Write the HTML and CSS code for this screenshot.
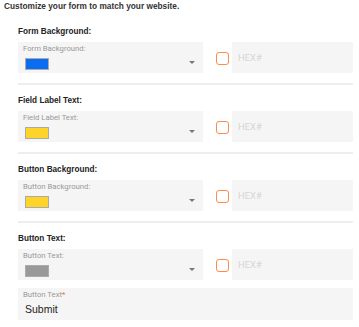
FILE: index.html
```html
<!DOCTYPE html>
<html lang="en">
<head>
    <meta charset="UTF-8">
    <meta name="viewport" content="width=device-width, initial-scale=1.0">
    <title>Customize form</title>
    <link rel="stylesheet" href="styles.css">
</head>
<body>
<div class="container">
    <p class="intro">Customize your form to match your website.</p>

    <div class="section">
        <h3 class="section-title">Form Background:</h3>
        <div class="color-row">
            <div class="picker">
                <span class="picker-label">Form Background:</span>
                <span class="swatch swatch-blue"></span>
                <span class="arrow"></span>
            </div>
            <span class="check"></span>
            <div class="hex">HEX#</div>
        </div>
        <div class="divider"></div>
    </div>

    <div class="section">
        <h3 class="section-title">Field Label Text:</h3>
        <div class="color-row">
            <div class="picker">
                <span class="picker-label">Field Label Text:</span>
                <span class="swatch swatch-yellow"></span>
                <span class="arrow"></span>
            </div>
            <span class="check"></span>
            <div class="hex">HEX#</div>
        </div>
        <div class="divider"></div>
    </div>

    <div class="section">
        <h3 class="section-title">Button Background:</h3>
        <div class="color-row">
            <div class="picker">
                <span class="picker-label">Button Background:</span>
                <span class="swatch swatch-yellow"></span>
                <span class="arrow"></span>
            </div>
            <span class="check"></span>
            <div class="hex">HEX#</div>
        </div>
        <div class="divider"></div>
    </div>

    <div class="section">
        <h3 class="section-title">Button Text:</h3>
        <div class="color-row">
            <div class="picker">
                <span class="picker-label">Button Text:</span>
                <span class="swatch swatch-grey"></span>
                <span class="arrow"></span>
            </div>
            <span class="check"></span>
            <div class="hex">HEX#</div>
        </div>
        <div class="text-field">
            <span class="picker-label">Button Text<em>*</em></span>
            <span class="text-value">Submit</span>
        </div>
    </div>
</div>
</body>
</html>
```

FILE: styles.css
```css
*{
    margin: 0;
    padding: 0;
    box-sizing: border-box;
}
body{
    background: #fff;
    color: #333;
    font-family: "Liberation Sans", Arial, sans-serif;
}
.container{
    width: 359px;
    padding: 0 6px 0 18px;
}
.intro{
    margin-left: -14px;
    font-size: 8.3px;
    font-weight: bold;
    line-height: 12px;
    color: #333;
}
.section-title{
    margin-top: 14px;
    font-size: 8.2px;
    font-weight: bold;
    line-height: 12px;
    color: #222;
}
.section + .section .section-title{
    margin-top: 10px;
}
.color-row{
    display: flex;
    align-items: center;
    margin-top: 4px;
    height: 31px;
}
.picker{
    position: relative;
    width: 185px;
    height: 31px;
    background: #f5f5f5;
    padding: 2px 5px 0;
    display: flex;
    flex-direction: column;
}
.picker-label{
    font-family: Roboto, "Liberation Sans", sans-serif;
    font-size: 7.7px;
    line-height: 10px;
    color: #999;
}
.picker-label em{
    font-style: normal;
    color: #ff6a2a;
}
.swatch{
    display: block;
    width: 24px;
    height: 12px;
    margin: 4px 0 0 2px;
    border: 1px solid #aaa;
}
.swatch-blue{
    background: #0a6cf0;
}
.swatch-yellow{
    background: #ffd42a;
}
.swatch-grey{
    background: #999;
}
.arrow{
    position: absolute;
    right: 8px;
    top: 19px;
    width: 0;
    height: 0;
    border-left: 3px solid transparent;
    border-right: 3px solid transparent;
    border-top: 3px solid #777;
}
.check{
    width: 13px;
    height: 13px;
    margin: 1px 3px 0 13px;
    border: 1.5px solid #ff8a4c;
    border-radius: 3px;
    background: #fff;
}
.hex{
    flex-grow: 1;
    height: 31px;
    background: #f5f5f5;
    padding-left: 6px;
    padding-top: 10px;
    font-family: Roboto, "Liberation Sans", sans-serif;
    font-size: 9.4px;
    line-height: 12px;
    color: #d6d6d6;
}
.divider{
    margin-top: 10px;
    height: 2px;
    background: #eee;
}
.text-field{
    margin-top: 8px;
    height: 32px;
    background: #f5f5f5;
    padding: 2px 5px 0;
    display: flex;
    flex-direction: column;
}
.text-value{
    margin-top: 2px;
    padding-left: 2px;
    font-size: 10.5px;
    line-height: 14px;
    color: #222;
}
```
